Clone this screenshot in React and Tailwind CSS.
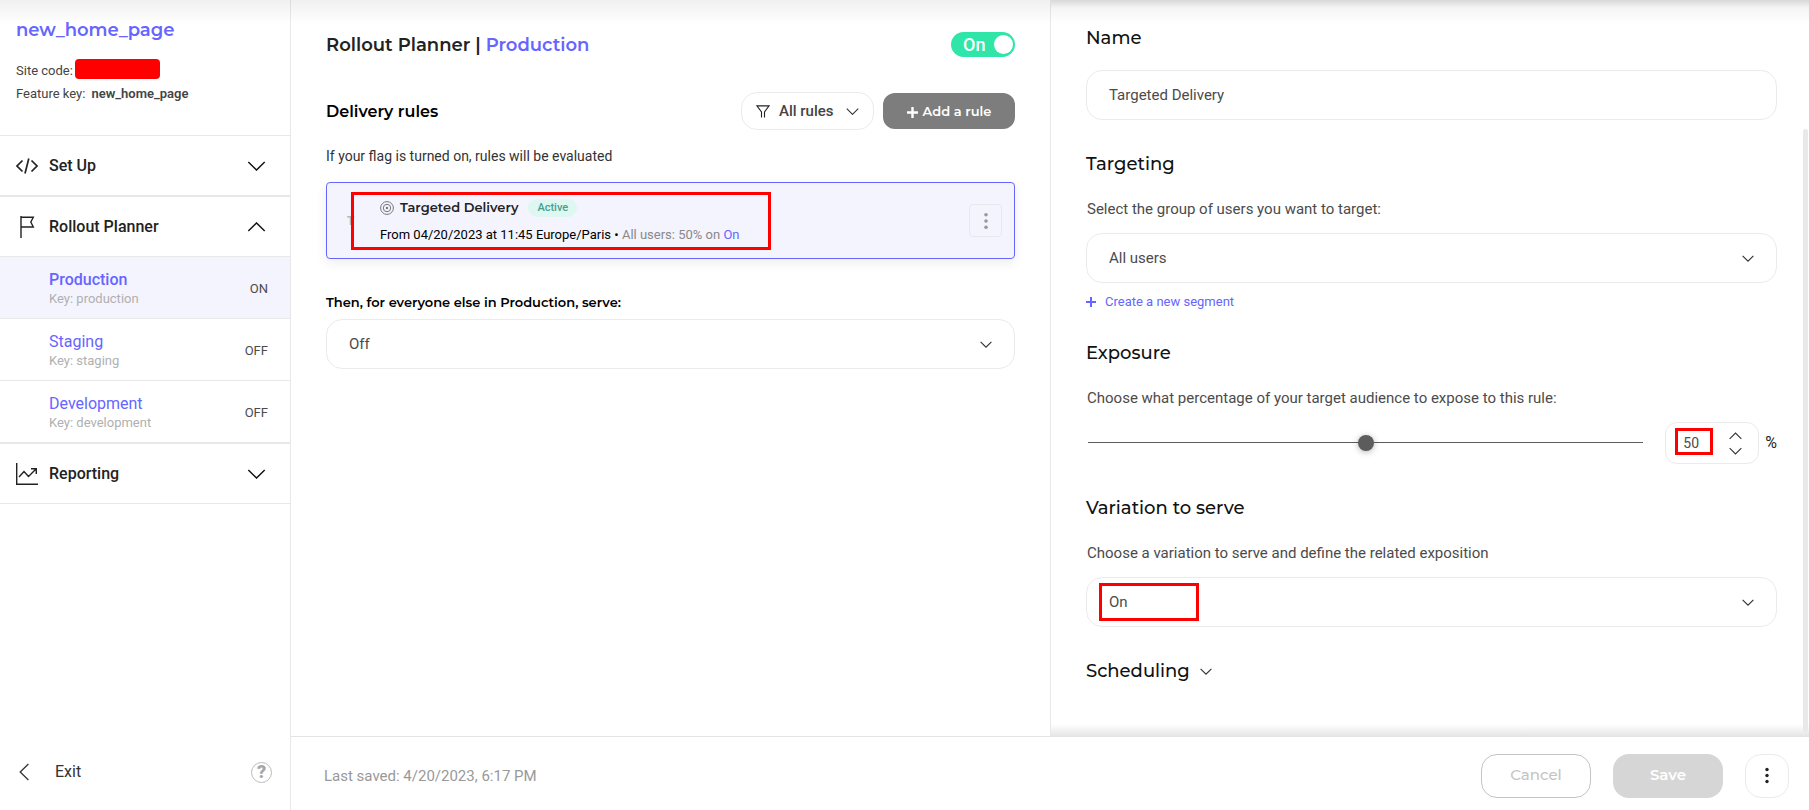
function Chevron({ className, dir = 'down', w = 1.1 }) {
  const d = { down: 'M1 1 L10 10 L19 1', up: 'M1 10 L10 1 L19 10' }[dir];
  return (
    <svg viewBox="0 0 20 11" fill="none" stroke="currentColor" strokeWidth={w} className={className} aria-hidden="true">
      <path d={d} vectorEffect="non-scaling-stroke" />
    </svg>
  );
}

function Dots({ className, r = 2 }) {
  return (
    <svg viewBox="0 0 6 20" fill="currentColor" className={className} aria-hidden="true">
      <circle cx="3" cy="3" r={r} />
      <circle cx="3" cy="10" r={r} />
      <circle cx="3" cy="17" r={r} />
    </svg>
  );
}

function SelectBox({ id, options, mark }) {
  return (
    <div className="relative">
      <select
        id={id}
        className="block h-[50px] w-full appearance-none rounded-2xl border border-[#ebebeb] bg-white pr-14 pl-[22px] text-[15px] text-[#4b4b4b]"
      >
        {options.map((o) => (
          <option key={o}>{o}</option>
        ))}
      </select>
      <Chevron className="pointer-events-none absolute top-[22px] right-[23px] h-[7px] w-3 text-[#333]" />
      {mark && <span className="pointer-events-none absolute top-1.5 left-[13px] h-[38px] w-[100px] border-[3px] border-[#fe0000]" />}
    </div>
  );
}

function NavSection({ icon, label, open }) {
  return (
    <button type="button" className="flex h-[61px] w-full items-center border-y border-[#e8e8e8] pr-6 pl-4 text-base font-medium text-[#222]">
      <span className="flex w-[33px] items-center">{icon}</span>
      <span className="flex-1 text-left">{label}</span>
      <Chevron dir={open ? 'up' : 'down'} w={1.4} className="h-[10px] w-[19px] text-[#111]" />
    </button>
  );
}

const environments = [
  { name: 'Production', key: 'production', state: 'ON', active: true },
  { name: 'Staging', key: 'staging', state: 'OFF' },
  { name: 'Development', key: 'development', state: 'OFF' },
];

function Sidebar() {
  return (
    <aside className="flex w-[291px] shrink-0 flex-col border-r border-[#e8e8e8]">
      <div className="h-[135px] px-4 pt-[18px]">
        <h1 className="font-['Montserrat','Inter',sans-serif] text-lg leading-6 font-semibold text-[#6665ff]">new_home_page</h1>
        <dl className="mt-[17px] text-[13px] leading-[22px] text-[#444]">
          <div className="flex gap-0.5">
            <dt className="pt-px">Site code:</dt>
            <dd className="h-5 w-[85px] rounded bg-[#fe0000]" />
          </div>
          <div className="flex gap-1.5 pt-px">
            <dt>Feature key:</dt>
            <dd className="font-semibold">new_home_page</dd>
          </div>
        </dl>
      </div>
      <nav>
        <NavSection
          label="Set Up"
          icon={
            <svg viewBox="0 0 22 16" className="h-4 w-[22px]" fill="none" stroke="#222" strokeWidth="1.7" aria-hidden="true">
              <path d="M6.5 2.5 L1 8 L6.5 13.5 M15.5 2.5 L21 8 L15.5 13.5 M12.8 0.5 L9 15.5" />
            </svg>
          }
        />
        <NavSection
          label="Rollout Planner"
          open
          icon={
            <svg viewBox="0 0 22 22" className="h-[22px] w-[22px]" fill="none" stroke="#222" strokeWidth="1.4" aria-hidden="true">
              <path d="M5 0 V22 M5 1.2 H17.3 L14.8 6 L17.3 11 H5" />
            </svg>
          }
        />
        <ul>
          {environments.map((e) => (
            <li key={e.key} className={e.active ? 'border-b border-[#e8e8e8] bg-[#f4f4ff]' : 'border-b border-[#e8e8e8]'}>
              <a href={'#' + e.key} className="flex h-[61px] items-center justify-between pt-0.5 pr-[22px] pl-[49px]">
                <span>
                  <span className={e.active ? 'block text-base leading-5 font-medium text-[#6665ff]' : 'block text-base leading-5 text-[#6665ff]'}>{e.name}</span>
                  <span className="block text-[13px] leading-[18px] text-[#b0b0b0]">Key: {e.key}</span>
                </span>
                <span className="text-[13px] text-[#4b4b4b]">{e.state}</span>
              </a>
            </li>
          ))}
        </ul>
        <NavSection
          label="Reporting"
          icon={
            <svg viewBox="0 0 22 22" className="h-[22px] w-[22px]" fill="none" stroke="#222" strokeWidth="1.4" aria-hidden="true">
              <path d="M0.7 0 V21.3 H22" />
              <path d="M3 14 L8 8.5 L12.5 13.5 L20 6 M15 5.7 H20.3 V11" />
            </svg>
          }
        />
      </nav>
      <div className="mt-auto flex items-center pr-[18px] pb-[26px] pl-[19px] text-[#333]">
        <a href="#exit" className="flex items-center text-base">
          <svg viewBox="0 0 10 18" className="mr-[26px] h-[18px] w-[10px]" fill="none" stroke="#333" strokeWidth="1.3" aria-hidden="true">
            <path d="M9.4 1 L1.2 9 L9.4 17" />
          </svg>
          Exit
        </a>
        <button type="button" aria-label="Help" className="ml-auto flex size-[21px] items-center justify-center rounded-full border border-[#bbb] text-lg leading-5 font-black text-[#a5a5a5]">
          ?
        </button>
      </div>
    </aside>
  );
}

function Planner() {
  return (
    <section className="border-r border-[#e8e8e8] px-[35px] pt-8">
      <div className="flex h-[25px] items-center justify-between">
        <h2 className="font-['Montserrat','Inter',sans-serif] text-lg font-semibold text-[#222]">
          Rollout Planner | <span className="text-[#6665ff]">Production</span>
        </h2>
        <button type="button" role="switch" aria-checked="true" className="flex h-[25px] w-16 items-center justify-between rounded-full bg-[#2fe5a7] pr-0.5 pl-3 text-lg font-medium text-white">
          On
          <span className="size-[19px] rounded-full bg-white" />
        </button>
      </div>
      <div className="mt-[35px] flex h-[38px] items-center gap-[9px]">
        <h3 className="flex-1 pt-0.5 font-['Montserrat','Inter',sans-serif] text-base font-semibold text-black">Delivery rules</h3>
        <button type="button" className="flex h-[38px] w-[133px] items-center rounded-2xl border border-[#ebebeb] px-3.5 text-[15px] font-medium text-[#444]">
          <svg viewBox="0 0 14 13" className="mr-[9px] h-[13px] w-3.5" fill="none" stroke="#222" strokeWidth="1.1" aria-hidden="true">
            <path d="M5.5 12.5 V7 L0.9 0.9 H13.1 L8.5 7 V12.5" />
          </svg>
          All rules
          <Chevron className="ml-auto h-[7px] w-[13px] text-[#333]" />
        </button>
        <button type="button" className="flex h-9 w-[132px] items-center justify-center gap-[5px] rounded-xl bg-[#7d7d7d] pt-0.5 font-['Montserrat','Inter',sans-serif] text-[13px] font-semibold text-white">
          <svg viewBox="0 0 11 11" className="size-[11px]" stroke="white" strokeWidth="2.4" aria-hidden="true">
            <path d="M5.5 0 V11 M0 5.5 H11" />
          </svg>
          Add a rule
        </button>
      </div>
      <p className="mt-4 text-sm leading-5 text-[#333]">If your flag is turned on, rules will be evaluated</p>
      <article className="relative mt-4 flex h-[77px] items-center rounded border border-[#6665ff] bg-[#f4f4ff] pr-3 pl-5 shadow-[0_4px_12px_rgba(0,0,0,0.07)]">
        <span className="w-[33px] text-xs font-bold text-[#b5b5b5]">T</span>
        <div className="flex-1 pt-0.5">
          <div className="flex h-[18px] items-center">
            <svg viewBox="0 0 14 14" className="mr-1.5 size-3.5" fill="none" stroke="#777" aria-hidden="true">
              <circle cx="7" cy="7" r="6.4" />
              <circle cx="7" cy="7" r="3.7" />
              <circle cx="7" cy="7" r="1.2" fill="#777" stroke="none" />
            </svg>
            <h4 className="font-['Montserrat','Inter',sans-serif] text-[13px] font-semibold text-[#222]">Targeted Delivery</h4>
            <span className="ml-2.5 rounded-full bg-[#dff7f1] px-[9px] text-[11px] leading-[18px] font-medium text-[#45a08e]">Active</span>
          </div>
          <p className="mt-2 text-[13px] leading-5 text-black">
            From 04/20/2023 at 11:45 Europe/Paris • <span className="text-[#888]">All users: 50% on</span> <span className="text-[#6665ff]">On</span>
          </p>
        </div>
        <button type="button" aria-label="Rule options" className="flex size-[33px] items-center justify-center rounded border border-[#e8e8ec] text-[#999]">
          <Dots className="h-[18px] w-1.5" />
        </button>
        <span className="pointer-events-none absolute top-[9px] left-6 h-[58px] w-[420px] border-[3px] border-[#fe0000]" />
      </article>
      <h4 className="mt-[33px] mb-[7px] font-['Montserrat','Inter',sans-serif] text-[13px] leading-5 font-semibold text-black">
        <label htmlFor="fallback">Then, for everyone else in Production, serve:</label>
      </h4>
      <SelectBox id="fallback" options={['Off', 'On']} />
    </section>
  );
}

const heading = "font-['Montserrat','Inter',sans-serif] text-lg leading-6 font-medium text-[#111]";
const hint = 'block pl-px text-[15px] leading-5 text-[#4b4b4b]';

function RulePanel() {
  return (
    <section className="relative pt-[26px] pr-8 pl-[35px]">
      <div className="pointer-events-none absolute inset-x-0 top-0 h-2 bg-linear-to-b from-black/10 to-transparent" />
      <div className="pointer-events-none absolute inset-x-0 bottom-0 h-3 bg-linear-to-t from-black/10 to-transparent" />
      <div className="pointer-events-none absolute top-[129px] right-px bottom-1 w-[5px] rounded-full bg-[#e9e9e9]" />
      <h2 className={heading}><label htmlFor="rule-name">Name</label></h2>
      <input id="rule-name" defaultValue="Targeted Delivery" className="mt-5 block h-[50px] w-full rounded-2xl border border-[#ebebeb] bg-white px-[22px] text-[15px] text-[#4b4b4b]" />

      <h2 className={heading + ' mt-8 mb-[23px]'}>Targeting</h2>
      <label htmlFor="segment" className={hint + ' mb-3.5'}>Select the group of users you want to target:</label>
      <SelectBox id="segment" options={['All users']} />
      <a href="#segment" className="mt-[9px] flex h-5 items-center gap-[9px] text-[13px] text-[#6665ff]">
        <svg viewBox="0 0 10 10" className="size-2.5" stroke="currentColor" strokeWidth="2" aria-hidden="true">
          <path d="M5 0 V10 M0 5 H10" />
        </svg>
        Create a new segment
      </a>

      <h2 className={heading + ' mt-[29px] mb-[23px]'}>Exposure</h2>
      <label htmlFor="exposure" className={hint + ' mb-3.5'}>Choose what percentage of your target audience to expose to this rule:</label>
      <div className="flex h-[42px] items-center">
        <input
          id="exposure"
          type="range"
          min="0"
          max="100"
          defaultValue="50"
          className="mt-3 ml-0.5 h-[17px] min-w-0 flex-1 appearance-none self-start bg-transparent [&::-webkit-slider-runnable-track]:h-[17px] [&::-webkit-slider-runnable-track]:bg-[linear-gradient(#5c5c5c,#5c5c5c)] [&::-webkit-slider-runnable-track]:bg-[length:100%_1px] [&::-webkit-slider-runnable-track]:bg-center [&::-webkit-slider-runnable-track]:bg-no-repeat [&::-webkit-slider-thumb]:mt-px [&::-webkit-slider-thumb]:size-4 [&::-webkit-slider-thumb]:appearance-none [&::-webkit-slider-thumb]:rounded-full [&::-webkit-slider-thumb]:bg-[#5c5c5c] [&::-webkit-slider-thumb]:shadow-[0_1px_6px_rgba(0,0,0,0.3)]"
        />
        <div className="relative mr-1.5 ml-[22px] flex h-[42px] w-[94px] items-center rounded-xl border border-[#ebebeb]">
          <input aria-label="Exposure percentage" inputMode="numeric" defaultValue="50" className="h-full w-14 min-w-0 pl-[17px] text-sm text-[#4b4b4b]" />
          <span className="ml-[7px] flex flex-col gap-[7px] text-[#333]">
            <button type="button" aria-label="Increase" className="block"><Chevron dir="up" className="h-[8px] w-[13px]" /></button>
            <button type="button" aria-label="Decrease" className="block"><Chevron className="h-[8px] w-[13px]" /></button>
          </span>
          <span className="pointer-events-none absolute top-[5px] left-[9px] h-[27px] w-[38px] border-[3px] border-[#fe0000]" />
        </div>
        <span className="text-base text-[#222]">%</span>
      </div>

      <h2 className={heading + ' mt-8 mb-[23px]'}>Variation to serve</h2>
      <label htmlFor="variation" className={hint + ' mb-3.5'}>Choose a variation to serve and define the related exposition</label>
      <SelectBox id="variation" options={['On', 'Off']} mark />

      <h2 className={heading + ' mt-8'}>
        <button type="button" className="flex items-center gap-2.5">
          Scheduling
          <Chevron className="h-[7px] w-3 text-[#333]" />
        </button>
      </h2>
    </section>
  );
}

export default function App() {
  return (
    <div className="relative flex min-h-screen bg-white font-['Roboto',sans-serif]">
      <div className="pointer-events-none absolute inset-x-0 top-0 z-10 h-6 bg-linear-to-b from-black/6 to-transparent" />
      <Sidebar />
      <div className="flex min-w-0 flex-1 flex-col">
        <main className="grid flex-1 grid-cols-[380fr_379fr]">
          <Planner />
          <RulePanel />
        </main>
        <footer className="flex h-[74px] items-center gap-[22px] border-t border-[#e5e5e5] pt-1 pr-5 pl-[33px]">
          <p className="flex-1 pt-0.5 text-[15px] text-[#999]">Last saved: 4/20/2023, 6:17 PM</p>
          <button type="button" className="h-11 w-[110px] rounded-2xl border border-[#c4c4c4] font-['Montserrat','Inter',sans-serif] text-[15px] font-medium text-[#c4c4c4]">Cancel</button>
          <button type="button" className="h-11 w-[110px] rounded-2xl bg-[#d6d6d6] font-['Montserrat','Inter',sans-serif] text-[15px] font-semibold text-white">Save</button>
          <button type="button" aria-label="More actions" className="flex size-11 items-center justify-center rounded-2xl border border-[#ebebeb] text-[#222]">
            <Dots className="h-[17px] w-1.5" />
          </button>
        </footer>
      </div>
    </div>
  );
}
